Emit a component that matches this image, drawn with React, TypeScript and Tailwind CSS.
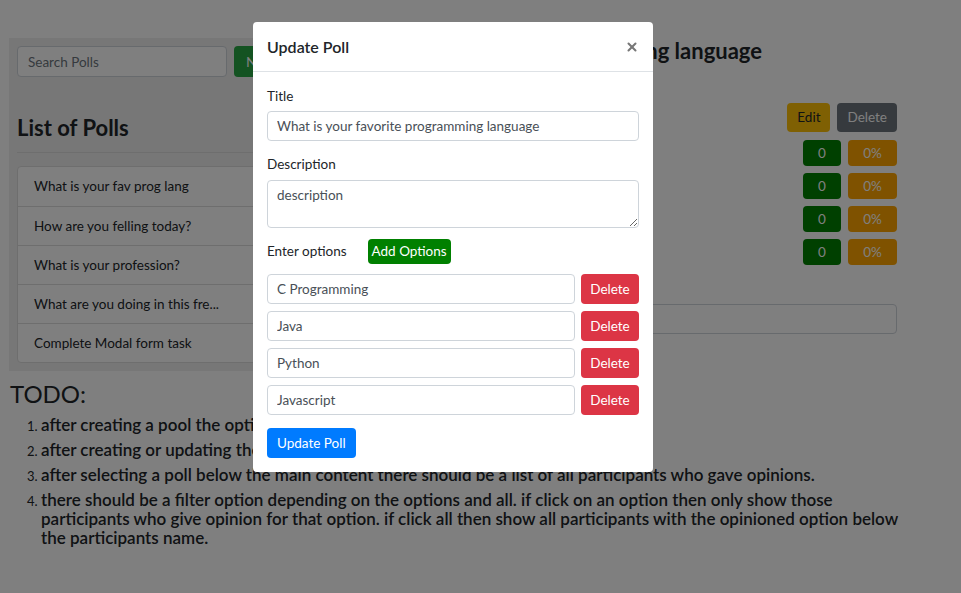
import { X } from "lucide-react";

const polls = [
  "What is your fav prog lang",
  "How are you felling today?",
  "What is your profession?",
  "What are you doing in this fre...",
  "Complete Modal form task",
];

const options = ["C Programming", "Java", "Python", "Javascript"];

const todos = [
  "after creating a pool the option should be shown in the list of polls immediately.",
  "after creating or updating the poll the modal should be closed.",
  "after selecting a poll below the main content there should be a list of all participants who gave opinions.",
  "there should be a filter option depending on the options and all. if click on an option then only show those participants who give opinion for that option. if click all then show all participants with the opinioned option below the participants name.",
];

function Sidebar() {
  return (
    <div className="w-[330px] shrink-0 bg-[#eeeeee] p-2">
      <div className="flex gap-[7px]">
        <input
          readOnly
          placeholder="Search Polls"
          className="w-[210px] h-[31px] rounded border border-[#ced4da] bg-white px-[10px] text-[13.5px] text-[#495057] placeholder:text-[#6c757d] outline-none"
        />
        <button className="h-[31px] rounded bg-[#28a745] px-3 text-[14px] text-white">
          New Poll
        </button>
      </div>
      <h2 className="mt-[37px] text-[22px] font-bold leading-[28px] text-[#212529]">
        List of Polls
      </h2>
      <hr className="mt-[10px] border-[#dcdcdc]" />
      <ul className="mt-[13px] rounded border border-[#dcdcdc] bg-white">
        {polls.map((p, i) => (
          <li
            key={i}
            className={`h-[39px] flex items-center px-4 text-[13.5px] text-[#212529] ${
              i > 0 ? "border-t border-[#dcdcdc]" : ""
            }`}
          >
            {p}
          </li>
        ))}
      </ul>
    </div>
  );
}

function Details() {
  return (
    <div className="flex-1 min-w-0 pl-4 pr-[64px]">
      <div className="flex justify-end pr-[135px]">
        <h2 className="shrink-0 whitespace-nowrap text-[22px] font-bold leading-[26px] text-[#212529]">
          What is your favorite programming language
        </h2>
      </div>
      <div className="mt-[39px] flex justify-end gap-[7px]">
        <button className="h-[29px] rounded bg-[#ffc107] px-[10px] text-[13.5px] text-[#212529]">
          Edit
        </button>
        <button className="h-[29px] rounded bg-[#6c757d] px-[10px] text-[13.5px] text-white">
          Delete
        </button>
      </div>
      <div className="mt-2 flex flex-col gap-[7px]">
        {options.map((o) => (
          <div key={o} className="flex items-center justify-between">
            <span className="text-[14px] text-[#212529]">{o}</span>
            <div className="flex gap-[7px]">
              <span className="w-[38px] h-[26px] rounded bg-[#008000] text-white text-[13.5px] flex items-center justify-center">
                0
              </span>
              <span className="w-[49px] h-[26px] rounded bg-[#ffa500] text-white text-[13.5px] flex items-center justify-center">
                0%
              </span>
            </div>
          </div>
        ))}
      </div>
      <input
        readOnly
        className="mt-[39px] w-full h-[30px] rounded border border-[#ced4da] bg-white"
      />
    </div>
  );
}

function UpdateModal() {
  return (
    <div className="absolute inset-0 bg-black/50">
      <div className="ml-[253px] mt-[22px] w-[400px] rounded bg-white">
        <div className="h-[50px] flex items-center justify-between border-b border-[#dee2e6] px-[14px]">
          <h5 className="text-[16px] font-semibold text-[#212529]">Update Poll</h5>
          <X className="w-[14px] h-[14px] text-[#777]" strokeWidth={3.5} />
        </div>
        <div className="px-[14px] pt-[14px] pb-[14px] text-[13.5px] text-[#212529]">
          <label className="block leading-[21px] mb-[4px]">Title</label>
          <input
            readOnly
            value="What is your favorite programming language"
            className="w-full h-[30px] rounded border border-[#ced4da] px-[9px] text-[13.5px] text-[#495057] outline-none"
          />
          <label className="block leading-[21px] mt-[13px] mb-[5px]">Description</label>
          <textarea
            readOnly
            value="description"
            className="block w-full h-[48px] rounded border border-[#ced4da] px-[9px] py-[4px] text-[13.5px] text-[#495057] outline-none"
          />
          <div className="mt-[11px] flex items-center">
            <span>Enter options</span>
            <button className="ml-[21px] h-[25px] rounded bg-[#008000] px-[4px] text-[13.5px] text-white">
              Add Options
            </button>
          </div>
          <div className="mt-[10px] flex flex-col gap-[7px]">
            {options.map((o) => (
              <div key={o} className="flex gap-[6px]">
                <input
                  readOnly
                  value={o}
                  className="flex-1 h-[30px] rounded border border-[#ced4da] px-[9px] text-[13.5px] text-[#495057] outline-none"
                />
                <button className="w-[58px] h-[30px] rounded bg-[#dc3545] text-[13.5px] text-white">
                  Delete
                </button>
              </div>
            ))}
          </div>
          <button className="mt-[13px] h-[30px] rounded bg-[#007bff] px-[10px] text-[13.5px] text-white">
            Update Poll
          </button>
        </div>
      </div>
    </div>
  );
}

export default function App() {
  return (
    <div className="relative w-full h-[593px] overflow-hidden bg-white font-['Lato','Noto_Sans',sans-serif]">
      <div className="flex pl-[9px] pt-[38px]">
        <Sidebar />
        <Details />
      </div>
      <div className="pl-[10px] pt-[9px]">
        <h2 className="text-[24px] leading-[28px] text-[#212529]">TODO:</h2>
        <ol className="mt-[7px] list-decimal pl-[31px] pr-[58px] text-[17px] font-semibold leading-[19px] text-[#212529] marker:text-[13px] marker:font-normal">
          {todos.map((t, i) => (
            <li key={i} className="mb-[6px]">
              {t}
            </li>
          ))}
        </ol>
      </div>
      <UpdateModal />
    </div>
  );
}
